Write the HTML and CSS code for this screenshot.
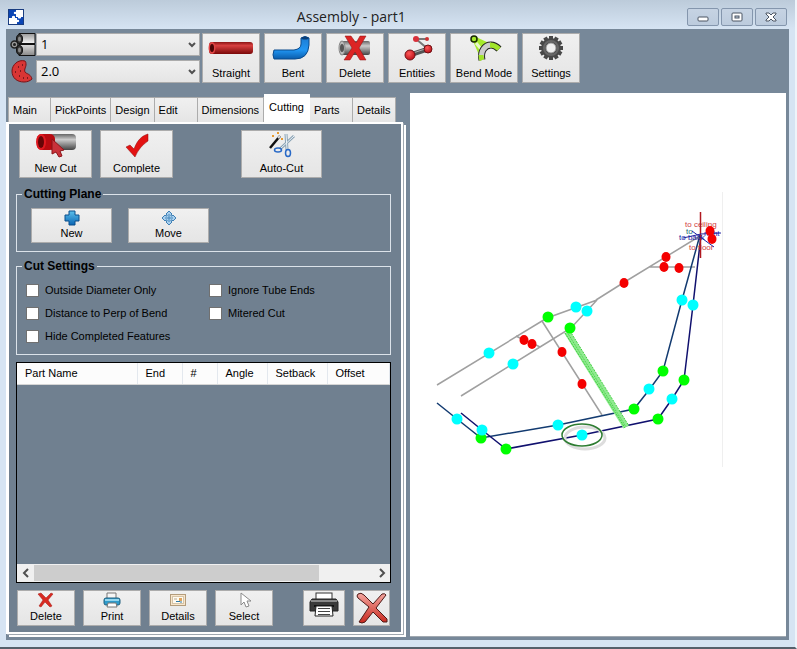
FILE: index.html
```html
<!DOCTYPE html>
<html lang="en">
<head>
    <meta charset="UTF-8">
    <title>Assembly - part1</title>
    <link rel="stylesheet" href="styles.css">
</head>
<body>
    <svg width="0" height="0" class="defs" aria-hidden="true">
        <defs>
            <linearGradient id="redTube" x1="0" y1="0" x2="0" y2="1">
                <stop offset="0" stop-color="#8c1414"/><stop offset=".3" stop-color="#d84040"/><stop offset="1" stop-color="#7a0808"/>
            </linearGradient>
            <linearGradient id="greyTube" x1="0" y1="0" x2="0" y2="1">
                <stop offset="0" stop-color="#666"/><stop offset=".35" stop-color="#ccc"/><stop offset="1" stop-color="#444"/>
            </linearGradient>
            <linearGradient id="lightTube" x1="0" y1="0" x2="0" y2="1">
                <stop offset="0" stop-color="#999"/><stop offset=".4" stop-color="#eee"/><stop offset="1" stop-color="#888"/>
            </linearGradient>
            <linearGradient id="blueTube" x1="0" y1="0" x2="0" y2="1">
                <stop offset="0" stop-color="#1c7ad0"/><stop offset=".6" stop-color="#2196f3"/><stop offset="1" stop-color="#0a5cab"/>
            </linearGradient>
            <linearGradient id="bluePlus" x1="0" y1="0" x2="0" y2="1">
                <stop offset="0" stop-color="#5cc0ec"/><stop offset="1" stop-color="#0a66b4"/>
            </linearGradient>
            <linearGradient id="redX" x1="0" y1="0" x2="0" y2="1">
                <stop offset="0" stop-color="#f4a7a0"/><stop offset="1" stop-color="#c8281e"/>
            </linearGradient>
            <radialGradient id="redBall" cx=".4" cy=".35" r=".7">
                <stop offset="0" stop-color="#ff5a5a"/><stop offset="1" stop-color="#b80c14"/>
            </radialGradient>
        </defs>
    </svg>

    <div class="window">
        <header class="titlebar">
            <svg class="app-icon" width="16" height="16" viewBox="0 0 16 16">
                <rect width="16" height="16" fill="#0b45b5"/>
                <path d="M9 1h6v7h-2c1 2-4 2-3 0H8V5C5 6 5 2 8 3V1zM1 9h3c-1-3 4-3 3 0h2v2c3-1 3 3 0 2v2H1z" fill="#fff"/>
                <rect x=".5" y=".5" width="15" height="15" fill="none" stroke="#1a3d80"/>
            </svg>
            <h1 class="title">Assembly - part1</h1>
            <div class="window-buttons">
                <button class="window-button" aria-label="Minimize">
                    <svg width="12" height="12" viewBox="0 0 12 12"><rect x="1" y="6" width="10" height="4" rx="1" fill="#fff" stroke="#4b5563"/></svg>
                </button>
                <button class="window-button" aria-label="Maximize">
                    <svg width="12" height="12" viewBox="0 0 12 12"><rect x="1" y="2" width="10" height="8" rx="1" fill="#fff" stroke="#4b5563"/><rect x="4" y="5" width="4" height="2" fill="#c5d3e3" stroke="#4b5563"/></svg>
                </button>
                <button class="window-button" aria-label="Close">
                    <svg width="12" height="12" viewBox="0 0 12 12"><path d="M1 2h3l2 2 2-2h3v1L8 6l3 3v1H8L6 8l-2 2H1V9l3-3-3-3z" fill="#fff" stroke="#4b5563"/></svg>
                </button>
            </div>
        </header>

        <main class="client">
            <div class="toolbar">
                <div class="combos">
                    <label for="part" class="combo-icon" aria-label="Part">
                        <svg width="26" height="23" viewBox="0 0 26 23">
                            <path d="M9 .5h16v10H9zM9 11.500h16v11H9z" fill="url(#lightTube)" stroke="#111"/>
                            <circle cx="4.500" cy="11.500" r="3.500" fill="#999" stroke="#222" stroke-width="1.500"/>
                            <circle cx="4.500" cy="11.500" r="1.500" fill="#222"/>
                            <ellipse cx="9.500" cy="6" rx="3" ry="4.500" fill="#333" stroke="#111"/>
                            <ellipse cx="9.500" cy="6" rx="1.500" ry="2.500" fill="#888"/>
                            <ellipse cx="9.500" cy="17" rx="3" ry="4.500" fill="#333" stroke="#111"/>
                            <ellipse cx="9.500" cy="17" rx="1.500" ry="2.500" fill="#888"/>
                        </svg>
                    </label>
                    <span class="combo">
                        <select id="part"><option>1</option></select>
                        <svg class="combo-arrow" width="8" height="6" viewBox="0 0 8 6"><path d="M1 1l3 3 3-3" fill="none" stroke="#505050" stroke-width="2"/></svg>
                    </span>
                    <label for="size" class="combo-icon" aria-label="Size">
                        <svg width="26" height="23" viewBox="0 0 26 23">
                            <path d="M15 1C8-1 2 5 2 11c0 7 5 11 12 11 3 0 6-1 8-3-1-4-4-5-6-6-3-2 0-6 0-8 0-2 0-3-1-4z" fill="#d93535" stroke="#7b1216"/>
                            <path d="M8 7h1M12 5h1M5 12h1M10 11h1M9 16h1M13 18h1M17 18h1" stroke="#601015" stroke-width="1.500"/>
                        </svg>
                    </label>
                    <span class="combo">
                        <select id="size"><option>2.0</option></select>
                        <svg class="combo-arrow" width="8" height="6" viewBox="0 0 8 6"><path d="M1 1l3 3 3-3" fill="none" stroke="#505050" stroke-width="2"/></svg>
                    </span>
                </div>
                <button class="button tool">
                    <svg width="46" height="26" viewBox="0 0 46 26">
                        <rect x="1" y="7" width="44" height="12" rx="3" fill="url(#redTube)"/>
                        <ellipse cx="4" cy="13" rx="3.500" ry="6" fill="#e04545"/><ellipse cx="4" cy="13" rx="2" ry="4" fill="#4a0505"/>
                    </svg>
                    Straight
                </button>
                <button class="button tool">
                    <svg width="46" height="26" viewBox="0 0 46 26">
                        <path d="M4 15h20q7-1 7-6V3q4-3 8 0v7q-1 14-14 14H4q-2-4 0-9z" fill="url(#blueTube)" stroke="#0a4a8c"/>
                        <ellipse cx="35" cy="3" rx="3.500" ry="1.500" fill="#0b3e78"/>
                    </svg>
                    Bent
                </button>
                <button class="button tool">
                    <svg width="46" height="26" viewBox="0 0 46 26">
                        <rect x="8" y="6" width="30" height="14" rx="2" fill="url(#greyTube)"/>
                        <ellipse cx="10" cy="13" rx="3" ry="7" fill="#bbb" stroke="#888"/><ellipse cx="10" cy="13" rx="2" ry="4" fill="#555"/>
                        <path d="M13 1h6l5 7 4-7h6l-7 12 7 12h-6l-5-8-5 8h-6l8-12z" fill="#dc2525" stroke="#8d1010" stroke-width=".5"/>
                    </svg>
                    Delete
                </button>
                <button class="button tool">
                    <svg width="46" height="26" viewBox="0 0 46 26">
                        <path d="M16 20l18-6" stroke="#555" stroke-width="5"/><path d="M16 19l18-6" stroke="#aaa"/>
                        <path d="M34 14L22 4h11" fill="none" stroke="#777" stroke-width="2"/>
                        <circle cx="16" cy="20" r="5" fill="url(#redBall)" stroke="#701015"/>
                        <circle cx="34" cy="14" r="4" fill="url(#redBall)" stroke="#701015"/>
                        <circle cx="22" cy="4" r="3" fill="#d8303a"/><circle cx="33" cy="4" r="2" fill="#c33"/>
                    </svg>
                    Entities
                </button>
                <button class="button tool tool-wide">
                    <svg width="46" height="26" viewBox="0 0 46 26">
                        <path d="M12 6l6 14 4-8 6-4L15 2z" fill="#a6ea2c"/>
                        <path d="M15 8l5 6" stroke="#e8f8c8" stroke-width="3"/>
                        <path d="M21 25c-2-9 3-15 9-15 3 0 5 1 8 4" fill="none" stroke="#222" stroke-width="7"/>
                        <path d="M21 25c-2-9 3-15 9-15" fill="none" stroke="#ccc" stroke-width="5"/>
                        <path d="M29 10c4 0 6 1 9 4M21 25c-1-2-1-4-1-5" fill="none" stroke="#a0e428" stroke-width="5"/>
                        <circle cx="13" cy="4" r="3" fill="#a6ea2c" stroke="#182800" stroke-width="1.500"/>
                    </svg>
                    Bend Mode
                </button>
                <button class="button tool">
                    <svg width="46" height="26" viewBox="0 0 46 26">
                        <g fill="#484848">
                            <path d="M21 1h4v24h-4zM11 11h24v4H11z"/>
                            <path d="M21 1h4v24h-4z" transform="rotate(30 23 13)"/>
                            <path d="M21 1h4v24h-4z" transform="rotate(60 23 13)"/>
                            <path d="M21 1h4v24h-4z" transform="rotate(120 23 13)"/>
                            <path d="M21 1h4v24h-4z" transform="rotate(150 23 13)"/>
                            <circle cx="23" cy="13" r="10"/>
                        </g>
                        <circle cx="23" cy="13" r="7" fill="none" stroke="#666" stroke-width="2"/>
                        <circle cx="23" cy="13" r="5" fill="#eee" stroke="#999"/>
                    </svg>
                    Settings
                </button>
            </div>

            <div class="workspace">
                <section class="sidebar">
                    <div class="tabs" role="tablist">
                        <button class="tab" role="tab">Main</button>
                        <button class="tab" role="tab">PickPoints</button>
                        <button class="tab" role="tab">Design</button>
                        <button class="tab" role="tab">Edit</button>
                        <button class="tab" role="tab">Dimensions</button>
                        <button class="tab active" role="tab" aria-selected="true">Cutting</button>
                        <button class="tab" role="tab">Parts</button>
                        <button class="tab" role="tab">Details</button>
                    </div>

                    <div class="panel" role="tabpanel">
                        <div class="cut-actions">
                            <button class="button action">
                                <svg width="42" height="26" viewBox="0 0 42 26">
                                    <rect x="14" y="2" width="27" height="16" rx="4" fill="url(#greyTube)"/>
                                    <rect x="2" y="2" width="18" height="16" rx="5" fill="#b80a10"/>
                                    <ellipse cx="6" cy="10" rx="5" ry="8" fill="#e01920"/><ellipse cx="6" cy="10" rx="3" ry="6" fill="#660507"/>
                                    <path d="M17 7v15l4-2 3 5 3-1-2-5 4-1z" fill="#c8323a" stroke="#8b1419"/>
                                </svg>
                                New Cut
                            </button>
                            <button class="button action">
                                <svg width="26" height="26" viewBox="0 0 26 26">
                                    <path d="M2 15l4-2 4 4c3-8 7-13 14-15v7c-6 4-10 9-13 16z" fill="#e31212" stroke="#8d0b0b" stroke-width=".5"/>
                                </svg>
                                Complete
                            </button>
                            <button class="button action auto-cut">
                                <svg width="26" height="26" viewBox="0 0 26 26">
                                    <path d="M1 16L11 4" stroke="#111" stroke-width="2.500"/><path d="M9 6l2-2" stroke="#ddd" stroke-width="2"/>
                                    <path d="M3 4h2M8 1h2M12 7h2" stroke="#e89a2e" stroke-width="2"/>
                                    <path d="M17 2l1 16M25 4L11 17" stroke="#8ba3b5" stroke-width="3"/><path d="M17 2l1 15M25 4L11 17" stroke="#eef4f8"/>
                                    <ellipse cx="9" cy="18" rx="3.500" ry="2" fill="none" stroke="#2869c7" stroke-width="1.500"/>
                                    <ellipse cx="19" cy="21" rx="2.500" ry="3.500" fill="none" stroke="#2869c7" stroke-width="1.500"/>
                                </svg>
                                Auto-Cut
                            </button>
                        </div>

                        <fieldset class="group plane">
                            <legend>Cutting Plane</legend>
                            <button class="button plane-button">
                                <svg width="16" height="16" viewBox="0 0 16 16"><path d="M5 1h6v4h4v6h-4v4H5v-4H1V5h4z" fill="url(#bluePlus)" stroke="#0a4f8c"/></svg>
                                New
                            </button>
                            <button class="button plane-button">
                                <svg width="16" height="16" viewBox="0 0 16 16">
                                    <path d="M8 1l3 3-1 1v1h1l1-1 3 3-3 3-1-1h-1v1l1 1-3 3-3-3 1-1v-1H5l-1 1-3-3 3-3 1 1h1V5L5 4z" fill="#a8cfee" stroke="#3f80b5"/>
                                    <path d="M8 4v8M4 8h8" stroke="#4788bb"/>
                                </svg>
                                Move
                            </button>
                        </fieldset>

                        <fieldset class="group settings">
                            <legend>Cut Settings</legend>
                            <label><input type="checkbox">Outside Diameter Only</label>
                            <label><input type="checkbox">Ignore Tube Ends</label>
                            <label><input type="checkbox">Distance to Perp of Bend</label>
                            <label><input type="checkbox">Mitered Cut</label>
                            <label><input type="checkbox">Hide Completed Features</label>
                        </fieldset>

                        <div class="list">
                            <table>
                                <thead>
                                    <tr>
                                        <th class="col-name">Part Name</th>
                                        <th class="col-end">End</th>
                                        <th class="col-number">#</th>
                                        <th class="col-angle">Angle</th>
                                        <th class="col-setback">Setback</th>
                                        <th>Offset</th>
                                    </tr>
                                </thead>
                                <tbody></tbody>
                            </table>
                            <div class="scrollbar">
                                <button aria-label="Scroll left"><svg width="8" height="10" viewBox="0 0 8 10"><path d="M6 1L2 5l4 4" fill="none" stroke="#505050" stroke-width="2"/></svg></button>
                                <div class="track"><div class="thumb"></div></div>
                                <button aria-label="Scroll right"><svg width="8" height="10" viewBox="0 0 8 10"><path d="M2 1l4 4-4 4" fill="none" stroke="#505050" stroke-width="2"/></svg></button>
                            </div>
                        </div>

                        <div class="list-actions">
                            <button class="button list-button">
                                <svg width="18" height="16" viewBox="0 0 18 16">
                                    <path d="M1 2l3-1 5 5 5-5 2 1-5 6 4 6-2 1-5-5-4 5-2-1 4-6z" fill="#d92a22" stroke="#a3160f" stroke-width=".5"/>
                                </svg>
                                Delete
                            </button>
                            <button class="button list-button">
                                <svg width="18" height="16" viewBox="0 0 18 16">
                                    <path d="M4 1h9v6H4z" fill="#f6f6f6" stroke="#777"/>
                                    <rect x="1" y="6" width="16" height="7" rx="2" fill="#2f9bcb" stroke="#22617f"/>
                                    <path d="M2 8h14" stroke="#93d6ef" stroke-width="2"/>
                                    <path d="M5 11h8l1 4H4z" fill="#fff" stroke="#777"/>
                                </svg>
                                Print
                            </button>
                            <button class="button list-button">
                                <svg width="18" height="16" viewBox="0 0 18 16">
                                    <rect x="1.500" y="2.500" width="15" height="11" fill="#f8e6cc" stroke="#b39c7c"/>
                                    <rect x="3.500" y="4.500" width="11" height="7" fill="#fffaf0" stroke="#d5c4a8"/>
                                    <path d="M5 7h3" stroke="#b8a88e"/><rect x="10" y="6" width="3" height="3" fill="#e0a35a"/>
                                    <path d="M7 10l1-1 1 1 1-1 1 1h2" fill="none" stroke="#2b79a8"/>
                                </svg>
                                Details
                            </button>
                            <button class="button list-button">
                                <svg width="18" height="16" viewBox="0 0 18 16">
                                    <path d="M6 1v12l3-3 2 5 3-1-2-5h4z" fill="#fff" stroke="#8a8a8a"/>
                                </svg>
                                Select
                            </button>
                            <button class="button print-all" aria-label="Print all">
                                <svg width="30" height="26" viewBox="0 0 30 26">
                                    <rect x="7" y="1" width="16" height="8" fill="#fff" stroke="#333"/>
                                    <path d="M3 7h24l2 3v9H1v-9z" fill="#3a3a3a" stroke="#222"/>
                                    <path d="M2 9h26" stroke="#8a8a8a" stroke-width="2"/>
                                    <path d="M5 14h20" stroke="#111" stroke-width="2"/>
                                    <path d="M7 14h16l1 10H6z" fill="#fff" stroke="#222"/>
                                    <path d="M9 16.500h12M9 19.500h12M9 22.500h12" stroke="#444"/>
                                </svg>
                            </button>
                            <button class="button close-all" aria-label="Close">
                                <svg width="32" height="32" viewBox="0 0 32 32">
                                    <path d="M2 2q3-2 6 1l9 9 9-10q3-1 4 1L20 16l11 11v3h-4l-10-10-8 10q-3 2-6 0l10-15L2 6q-2-2 0-4z" fill="url(#redX)" stroke="#4d1a17"/>
                                </svg>
                            </button>
                        </div>
                    </div>
                </section>

                <section class="canvas">
                    <svg class="drawing" viewBox="410 93 376 542" preserveAspectRatio="xMinYMin meet">
                        <path d="M722.500 192v275" stroke="#efefef"/>
                        <!-- frame rails -->
                        <g fill="none" stroke="#a0a0a0" stroke-width="1.500">
                            <path d="M437 385l105-64 5-3 50-18-26 28-31 19-79 49M596 300l27-17 77-47M649 267h46"/>
                            <path d="M542 321l60 94M516 336l8 4 8 3 8 4"/>
                        </g>
                        <g fill="none" stroke="#123a70" stroke-width="1.500">
                            <path d="M437 403l20 16 24 19 77-13 76-16 15-19 14-19 19-71 18-65"/>
                        </g>
                        <g fill="none" stroke="#10106e" stroke-width="1.500">
                            <path d="M461 413l21 17 24 19 76-14 76-16 14-20 12-19 9-75 8-70"/>
                        </g>
                        <g fill="none" stroke="#3fd03f">
                            <path d="M567 332l59 95" stroke="#8fea8f" stroke-width="6"/>
                            <path d="M565 333l60 95M570 331l59 95" stroke-dasharray="2 1"/>
                            <path d="M567 332l59 95" stroke-dasharray="1 1"/>
                        </g>
                        <ellipse cx="585" cy="438" rx="20" ry="11" fill="none" stroke="#ddd" stroke-width="3"/>
                        <ellipse cx="582" cy="435" rx="20" ry="11" fill="none" stroke="#2e7d32" stroke-width="1.500"/>
                        <!-- direction labels -->
                        <g class="labels">
                            <text x="685" y="227" fill="#d04040">to ceiling</text>
                            <text x="686" y="234" fill="#207070">to</text>
                            <text x="679" y="240" fill="#2020a0">to back</text>
                            <text x="704" y="236" fill="#2020c0">right</text>
                            <text x="689" y="250" fill="#d04040">to floor</text>
                        </g>
                        <path d="M700.500 212v46" stroke="#b01820" stroke-width="1.500"/>
                        <path d="M683 238l18-4 20-1M692 231l22 16" stroke="#2020a0" fill="none"/>
                        <g fill="#f40000">
                            <ellipse cx="524" cy="340" rx="4.500" ry="5"/><ellipse cx="532" cy="344" rx="4.500" ry="5"/>
                            <ellipse cx="562" cy="352" rx="4.500" ry="5"/><ellipse cx="582" cy="384" rx="4.500" ry="5"/>
                            <ellipse cx="624" cy="283" rx="4.500" ry="5"/><ellipse cx="666" cy="257" rx="4.500" ry="5"/>
                            <ellipse cx="664" cy="267" rx="4.500" ry="5"/><ellipse cx="679" cy="268" rx="4.500" ry="5"/>
                            <ellipse cx="710" cy="231" rx="4.500" ry="5"/><ellipse cx="712" cy="239" rx="4.500" ry="5"/>
                        </g>
                        <g fill="#0f0">
                            <circle cx="548" cy="317" r="5.500"/><circle cx="570" cy="328" r="5.500"/>
                            <circle cx="481" cy="438" r="5.500"/><circle cx="506" cy="449" r="5.500"/>
                            <circle cx="634" cy="409" r="5.500"/><circle cx="658" cy="419" r="5.500"/>
                            <circle cx="663" cy="371" r="5.500"/><circle cx="684" cy="380" r="5.500"/>
                        </g>
                        <g fill="#0ff">
                            <circle cx="489" cy="353" r="5.500"/><circle cx="513" cy="364" r="5.500"/>
                            <circle cx="576" cy="307" r="5.500"/><circle cx="587" cy="311" r="5.500"/>
                            <circle cx="457" cy="419" r="5.500"/><circle cx="482" cy="430" r="5.500"/>
                            <circle cx="558" cy="425" r="5.500"/><circle cx="582" cy="435" r="5.500"/>
                            <circle cx="649" cy="389" r="5.500"/><circle cx="672" cy="399" r="5.500"/>
                            <circle cx="682" cy="300" r="5.500"/><circle cx="693" cy="305" r="5.500"/>
                        </g>
                    </svg>
                </section>
            </div>
        </main>
    </div>
</body>
</html>
```
FILE: styles.css
```css
* {
    box-sizing: border-box;
}
body {
    margin: 0;
    font-family: "Liberation Sans", Arial, sans-serif;
    font-size: 11px;
    line-height: 13px;
    color: #000;
}
button, select, input {
    font: inherit;
    color: inherit;
    margin: 0;
}
svg {
    display: block;
    flex: none;
}
.defs {
    position: absolute;
}

.window {
    height: 100vh;
    min-height: 640px;
    display: flex;
    flex-direction: column;
    padding: 0 6px 7px;
    background: #d6e4f3;
    border-right: 2px solid #eef4fa;
    border-bottom: 2px solid #55606b;
}
.titlebar {
    display: grid;
    grid-template-columns: 3fr auto 4fr;
    align-items: center;
    height: 29px;
    flex: none;
    margin: 0 -6px;
    padding: 5px 4px 0 8px;
    background: linear-gradient(#bccbda, #d6e4f3);
}
.title {
    margin: 0;
    font-family: "Open Sans", sans-serif;
    font-size: 14px;
    font-weight: normal;
    line-height: 20px;
    color: #222;
}
.window-buttons {
    display: flex;
    justify-content: flex-end;
    gap: 2px;
    padding-right: 4px;
}
.window-button {
    display: flex;
    align-items: center;
    justify-content: center;
    width: 32px;
    height: 18px;
    padding: 0;
    border: 1px solid #8496ad;
    border-radius: 2px;
    background: linear-gradient(#c6d3e3, #bccbdd);
}

.client {
    flex: 1;
    min-height: 0;
    display: flex;
    flex-direction: column;
    background: #778899;
}
.toolbar {
    display: flex;
    gap: 4px;
    flex: none;
    padding: 4px 4px 10px;
}
.combos {
    display: grid;
    grid-template-columns: 26px 164px;
    row-gap: 4px;
    margin-right: -2px;
}
.combo {
    position: relative;
}
.combo select {
    display: block;
    appearance: none;
    width: 100%;
    height: 23px;
    padding: 0 6px 0 4px;
    border: 1px solid #acacac;
    border-radius: 0;
    background: linear-gradient(#f0f0f0, #e5e5e5);
    font-family: "Open Sans", sans-serif;
    font-size: 13px;
}
.combo-arrow {
    position: absolute;
    right: 4px;
    top: 9px;
    pointer-events: none;
}

.button {
    display: flex;
    flex-direction: column;
    align-items: center;
    justify-content: space-between;
    padding: 1px 0 2px;
    border: 1px solid #acacac;
    background: linear-gradient(#f0f0f0, #e5e5e5);
    white-space: nowrap;
}
.tool {
    width: 58px;
    height: 50px;
}
.tool-wide {
    width: 68px;
}

.workspace {
    flex: 1;
    min-height: 0;
    display: flex;
    gap: 5px;
    padding: 0 3px 3px 0;
}
.sidebar {
    width: 399px;
    flex: none;
    display: flex;
    flex-direction: column;
    padding: 1px 2px 3px 0;
}
.tabs {
    display: flex;
    align-items: flex-end;
    height: 28px;
    flex: none;
    padding-left: 2px;
}
.tab {
    min-width: 43px;
    height: 25px;
    padding: 0 4px;
    border: 1px solid #acacac;
    border-left-width: 0;
    border-bottom: 0;
    background: linear-gradient(#f0f0f0, #e5e5e5);
    text-align: left;
}
.tab:first-child {
    border-left-width: 1px;
}
.tab.active {
    height: 28px;
    padding: 0 5px 2px;
    border-color: #fff;
    background: #fff;
}

.panel {
    flex: 1;
    min-height: 0;
    display: flex;
    flex-direction: column;
    padding: 6px 10px 6px 7px;
    border: 2px solid #fff;
    border-left-width: 3px;
    background: #708090;
    box-shadow: 1px 1px 0 #a0a8b0, 3px 3px 0 #fff;
}
.cut-actions {
    display: flex;
    gap: 8px;
    padding: 0 3px;
}
.action {
    width: 73px;
    height: 48px;
}
.auto-cut {
    width: 81px;
    margin-left: 60px;
}
.group {
    min-width: 0;
    margin: 0;
    border: 1px solid #dce3ea;
}
.group legend {
    padding: 0 2px;
    font-size: 12px;
    font-weight: bold;
}
.plane {
    display: flex;
    gap: 16px;
    margin-top: 10px;
    padding: 7px 14px 8px;
}
.plane legend {
    margin-left: -9px;
}
.plane-button {
    width: 81px;
    height: 35px;
}
.settings {
    display: grid;
    grid-template-columns: 183px 1fr;
    row-gap: 10px;
    margin-top: 8px;
    padding: 11px 9px;
}
.settings legend {
    margin-left: -4px;
}
.settings label {
    display: flex;
    align-items: center;
    gap: 6px;
}
.settings input {
    appearance: none;
    width: 13px;
    height: 13px;
    border: 1px solid #707070;
    background: #fff;
}

.list {
    flex: 1;
    min-height: 0;
    display: flex;
    flex-direction: column;
    justify-content: space-between;
    margin-top: 7px;
    border: 1px solid #000;
    overflow: hidden;
}
.list table {
    width: 100%;
    border-collapse: collapse;
    table-layout: fixed;
}
.list th {
    height: 21px;
    padding: 0 7px 0 8px;
    border-right: 1px solid #e3e8ee;
    border-bottom: 1px solid #d5d5d5;
    background: #fcfcfc;
    font-weight: normal;
    text-align: left;
}
.col-name { width: 120px; }
.col-end { width: 45px; }
.col-number { width: 35px; }
.col-angle { width: 50px; }
.col-setback { width: 60px; }

.scrollbar {
    display: flex;
    height: 18px;
    background: #f0f0f0;
}
.scrollbar button {
    display: flex;
    align-items: center;
    justify-content: center;
    width: 17px;
    padding: 0;
    border: 0;
    background: none;
}
.track {
    flex: 1;
    padding: 1px 0;
}
.thumb {
    width: 84%;
    height: 100%;
    background: #cdcdcd;
}

.list-actions {
    display: flex;
    gap: 8px;
    margin-top: 7px;
    padding: 0 1px;
}
.list-button {
    width: 58px;
    height: 36px;
}
.print-all {
    width: 42px;
    height: 36px;
    margin-left: auto;
}
.close-all {
    width: 37px;
    height: 36px;
}

.canvas {
    flex: 1;
    min-width: 0;
    border-bottom: 1px solid #a0a8b0;
    background: #fff;
    overflow: hidden;
}
.drawing {
    width: 100%;
    height: 100%;
}
.labels {
    font-size: 8px;
}
```
